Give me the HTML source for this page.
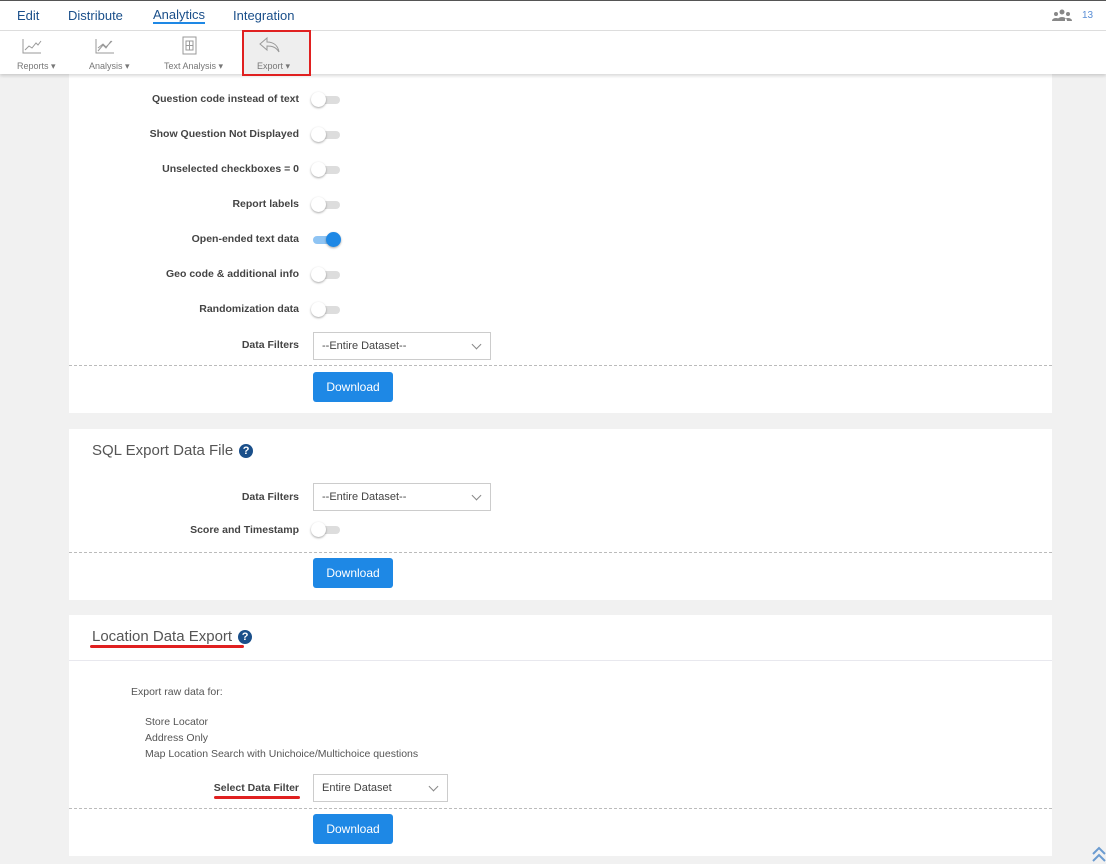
<!DOCTYPE html>
<html><head><style>
*{box-sizing:border-box;margin:0;padding:0}
body{width:1106px;height:864px;overflow:hidden;background:#f1f1f1;font-family:"Liberation Sans",sans-serif;position:relative;color:#444}
.top{position:absolute;left:0;top:0;width:1106px;height:74px;background:#fff;border-top:1px solid #555;box-shadow:0 2px 3px rgba(0,0,0,.15);z-index:2}
.nav{height:30px;border-bottom:1px solid #ddd;position:relative}
.nav span{position:absolute;top:7px;font-size:13px;color:#1a4f8a}
.tb span{position:absolute;top:60px;font-size:9px;color:#777}
.panel{position:absolute;left:69px;width:983px;background:#fff}
.lbl{position:absolute;right:753px;font-size:10.5px;font-weight:bold;color:#444;white-space:nowrap}
.tg{position:absolute;left:244px;width:27px;height:8px;border-radius:4px;background:#ddd}
.tg:after{content:"";position:absolute;left:-2px;top:-4px;width:15px;height:15px;border-radius:50%;background:#fff;box-shadow:0 1px 2px rgba(0,0,0,.35)}
.tg.on{background:#8fc4f3}.tg.on:after{left:13px;background:#1e88e5}
.sel{position:absolute;left:244px;width:178px;height:28px;border:1px solid #ccc;font-size:11px;color:#444;padding:7px 0 0 8px}
.sel:after{content:"";position:absolute;right:10px;top:8px;width:6px;height:6px;border-right:1px solid #888;border-bottom:1px solid #888;transform:rotate(45deg)}
.dash{position:absolute;left:0;width:983px;border-top:1px dashed #bbb}
.btn{position:absolute;left:244px;width:80px;height:30px;background:#1e88e5;color:#fff;border-radius:3px;font-size:12px;text-align:center;line-height:30px}
.h{position:absolute;left:23px;font-size:15px;color:#555}
.q{display:inline-block;width:14px;height:14px;border-radius:50%;background:#1a4f8a;color:#fff;font-size:11px;font-weight:bold;text-align:center;line-height:14px;vertical-align:1px;margin-left:6px}
.t{position:absolute;font-size:10.5px;color:#555}
</style></head><body>
<div class="top">
 <div class="nav">
  <span style="left:17px">Edit</span><span style="left:68px">Distribute</span>
  <span style="left:153px;border-bottom:2px solid #1e88e5;line-height:14px">Analytics</span><span style="left:233px">Integration</span>
  <svg style="position:absolute;left:1052px;top:8px" width="20" height="12" viewBox="0 0 20 12"><circle cx="10" cy="3" r="2.5" fill="#888"/><circle cx="4" cy="5" r="2" fill="#888"/><circle cx="16" cy="5" r="2" fill="#888"/><path d="M5 12a5 4 0 0 1 10 0z M0 12a4 3 0 0 1 7-2v2z M20 12a4 3 0 0 0-7-2v2z" fill="#888"/></svg>
  <span style="left:1082px;font-size:10px;color:#5b8fd6;top:9px">13</span>
 </div>
 <div class="tb">
  <svg style="position:absolute;left:22px;top:37px" width="20" height="16"><path d="M1 1V15H19M3 12l4-4 3 2 4-5 2 2 3-4" stroke="#999" fill="none"/></svg>
  <svg style="position:absolute;left:95px;top:37px" width="20" height="16"><path d="M1 1V15H19M3 13l5-6 3 3 5-7M3 10l5-4 3 3 6-6" stroke="#999" fill="none"/></svg>
  <svg style="position:absolute;left:182px;top:35px" width="16" height="20"><rect x="1" y="1" width="13" height="17" stroke="#999" fill="none"/><rect x="4" y="5" width="7" height="9" stroke="#999" fill="none"/><path d="M7.5 5v9M4 9.5h7" stroke="#999"/></svg>
  <div style="position:absolute;left:242px;top:29px;width:69px;height:46px;border:2px solid #e02020;background:#eee"></div>
  <svg style="position:absolute;left:258px;top:35px" width="24" height="18"><path d="M9 2L2 8l7 6v-4c5 0 9 1 12 6-1-6-5-10-12-10z" stroke="#999" fill="none"/></svg>
  <span style="left:17px">Reports &#9662;</span><span style="left:89px">Analysis &#9662;</span><span style="left:164px">Text Analysis &#9662;</span><span style="left:257px">Export &#9662;</span>
 </div>
</div>

<div class="panel" style="top:74px;height:339px">
 <div class="lbl" style="top:19px">Question code instead of text</div><div class="tg" style="top:22px"></div>
 <div class="lbl" style="top:54px">Show Question Not Displayed</div><div class="tg" style="top:57px"></div>
 <div class="lbl" style="top:89px">Unselected checkboxes = 0</div><div class="tg" style="top:92px"></div>
 <div class="lbl" style="top:124px">Report labels</div><div class="tg" style="top:127px"></div>
 <div class="lbl" style="top:159px">Open-ended text data</div><div class="tg on" style="top:162px"></div>
 <div class="lbl" style="top:194px">Geo code &amp; additional info</div><div class="tg" style="top:197px"></div>
 <div class="lbl" style="top:229px">Randomization data</div><div class="tg" style="top:232px"></div>
 <div class="lbl" style="top:265px">Data Filters</div><div class="sel" style="top:258px">--Entire Dataset--</div>
 <div class="dash" style="top:291px"></div>
 <div class="btn" style="top:298px">Download</div>
</div>

<div class="panel" style="top:429px;height:171px">
 <div class="h" style="top:13px">SQL Export Data File<span class="q">?</span></div>
 <div class="lbl" style="top:62px">Data Filters</div><div class="sel" style="top:54px">--Entire Dataset--</div>
 <div class="lbl" style="top:95px">Score and Timestamp</div><div class="tg" style="top:97px"></div>
 <div class="dash" style="top:123px"></div>
 <div class="btn" style="top:129px">Download</div>
</div>

<div class="panel" style="top:615px;height:241px">
 <div class="h" style="top:13px">Location Data Export<span class="q">?</span></div>
 <div style="position:absolute;left:21px;top:30px;width:154px;height:3px;background:#e02020;border-radius:2px"></div>
 <div style="position:absolute;left:0;top:45px;width:983px;border-top:1px solid #e8e8ee"></div>
 <div class="t" style="left:62px;top:71px">Export raw data for:</div>
 <div class="t" style="left:76px;top:99px;line-height:16px">Store Locator<br>Address Only<br>Map Location Search with Unichoice/Multichoice questions</div>
 <div class="lbl" style="top:167px">Select Data Filter</div>
 <div style="position:absolute;left:145px;top:181px;width:86px;height:3px;background:#e02020;border-radius:2px"></div>
 <div class="sel" style="top:159px;width:135px">Entire Dataset</div>
 <div class="dash" style="top:193px"></div>
 <div class="btn" style="top:199px">Download</div>
</div>
<svg style="position:absolute;left:1092px;top:845px" width="14" height="19"><path d="M1 9l6-6 6 6M1 16l6-6 6 6" stroke="#6b9bd0" stroke-width="2" fill="none"/></svg>
</body></html>
